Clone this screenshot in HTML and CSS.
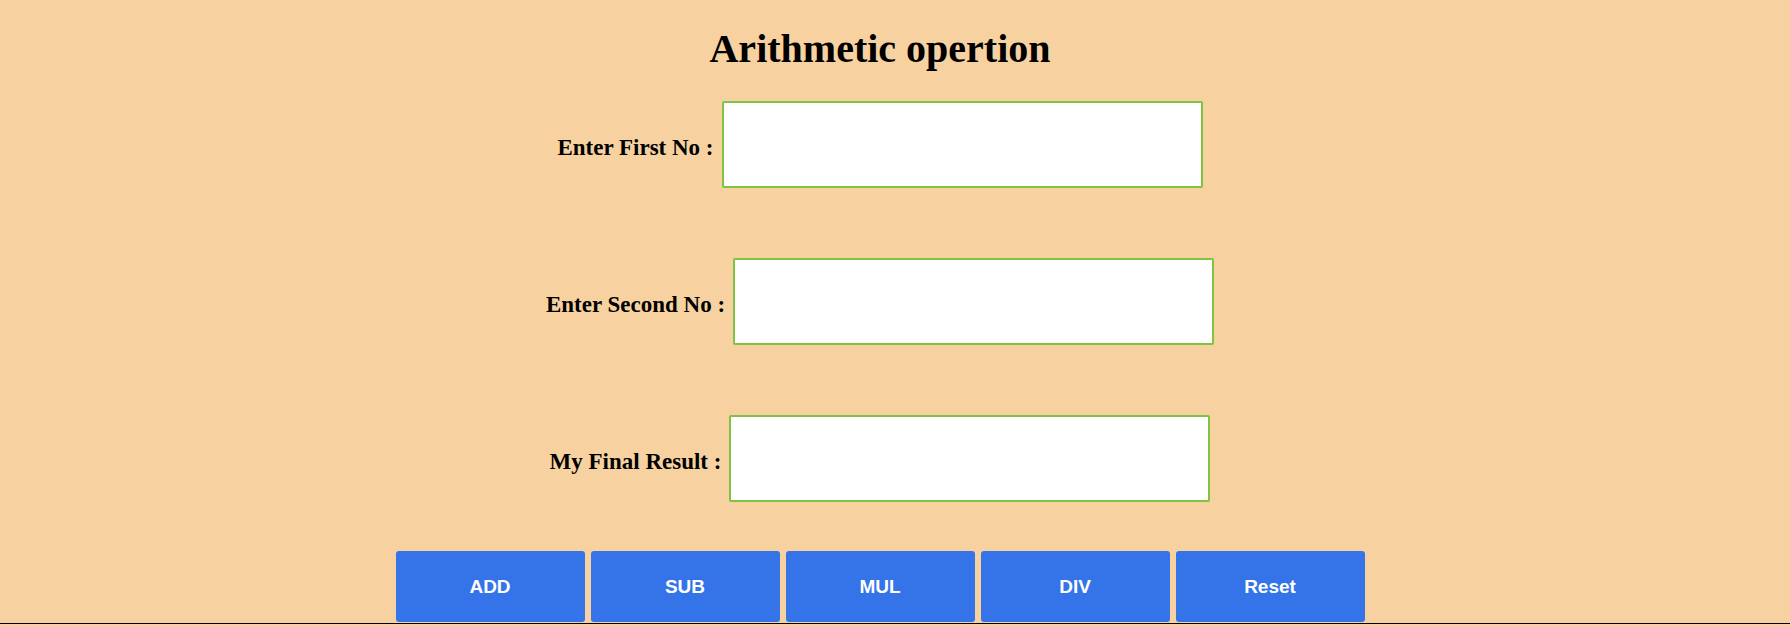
FILE: index.html
```html
<!DOCTYPE html>
<html lang="en">
<head>
<meta charset="utf-8">
<title>Arithmetic opertion</title>
<link rel="stylesheet" href="styles.css">
</head>
<body>
<div class="page">
  <h1 class="title">Arithmetic opertion</h1>
  <form class="calc">
    <div class="row">
      <label class="label" for="first">Enter First No :</label>
      <input class="field" id="first" type="text">
    </div>
    <div class="row">
      <label class="label" for="second">Enter Second No :</label>
      <input class="field" id="second" type="text">
    </div>
    <div class="row">
      <label class="label" for="result">My Final Result :</label>
      <input class="field" id="result" type="text">
    </div>
    <div class="buttons">
      <button class="btn" type="button">ADD</button>
      <button class="btn" type="button">SUB</button>
      <button class="btn" type="button">MUL</button>
      <button class="btn" type="button">DIV</button>
      <button class="btn" type="reset">Reset</button>
    </div>
  </form>
</div>
</body>
</html>
```

FILE: styles.css
```css
html, body {
  margin: 0;
  padding: 0;
  background: #f7d2a0;
}

body {
  font-family: "Liberation Serif", "Times New Roman", serif;
  color: #000;
  height: 626px;
  overflow: hidden;
}

.page {
  padding: 26px 30px 1px 0;
  border-bottom: 1px solid #000;
}

.title {
  margin: 0;
  font-size: 40px;
  line-height: 46px;
  font-weight: bold;
  text-align: center;
}

.calc {
  display: flex;
  flex-direction: column;
  align-items: center;
  margin: 29px 0 0 0;
}

.row {
  display: flex;
  justify-content: center;
  align-items: center;
  gap: 8px;
  margin-bottom: 70px;
}

.row:nth-child(3) {
  margin-bottom: 49px;
}

.label {
  font-size: 23px;
  font-weight: bold;
  padding-top: 6px;
  white-space: nowrap;
}

.field {
  box-sizing: border-box;
  width: 481px;
  height: 87px;
  border: 2px solid #80c342;
  border-radius: 2px;
  background: #fff;
  margin: 0;
  padding: 0 8px;
  outline: none;
}

.buttons {
  display: flex;
  justify-content: center;
  gap: 6px;
}

.btn {
  width: 189px;
  height: 71px;
  margin: 0;
  border: none;
  border-radius: 3px;
  background: #3474e8;
  color: #fff;
  font-family: "Liberation Sans", Arial, sans-serif;
  font-weight: bold;
  font-size: 19px;
  cursor: pointer;
}
```
